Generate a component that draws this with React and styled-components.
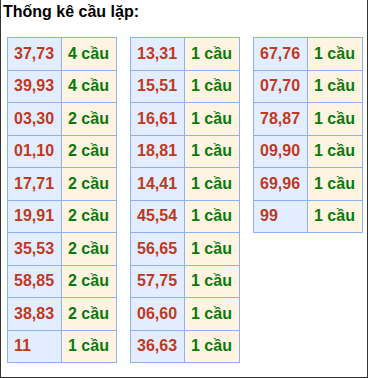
import styled, { createGlobalStyle } from "styled-components";

const data = [
  [
    ["37,73", 4],
    ["39,93", 4],
    ["03,30", 2],
    ["01,10", 2],
    ["17,71", 2],
    ["19,91", 2],
    ["35,53", 2],
    ["58,85", 2],
    ["38,83", 2],
    ["11", 1],
  ],
  [
    ["13,31", 1],
    ["15,51", 1],
    ["16,61", 1],
    ["18,81", 1],
    ["14,41", 1],
    ["45,54", 1],
    ["56,65", 1],
    ["57,75", 1],
    ["06,60", 1],
    ["36,63", 1],
  ],
  [
    ["67,76", 1],
    ["07,70", 1],
    ["78,87", 1],
    ["09,90", 1],
    ["69,96", 1],
    ["99", 1],
  ],
];

export default function App() {
  return (
    <>
      <GlobalStyle />
      <Box>
        <Title>Thống kê cầu lặp:</Title>
        <Columns>
          {data.map((col, i) => (
            <Table key={i}>
              {col.map(([pair, count]) => (
                <Row key={pair}>
                  <Pair>{pair}</Pair>
                  <Count>{count} cầu</Count>
                </Row>
              ))}
            </Table>
          ))}
        </Columns>
      </Box>
    </>
  );
}

const GlobalStyle = createGlobalStyle`
  body {
    margin: 0;
    background: #ffffff;
    font-family: "Liberation Sans", Arial, sans-serif;
  }
`;

const Box = styled.div`
  width: 368px;
  height: 378px;
  box-sizing: border-box;
  border: 1px solid #333333;
  border-top: none;
  background: #ffffff;
`;

const Title = styled.div`
  font-weight: 700;
  font-size: 16px;
  line-height: 18px;
  color: #000000;
  padding: 3px 0 0 2px;
`;

const Columns = styled.div`
  display: flex;
  align-items: flex-start;
  gap: 13px;
  padding: 16px 0 0 6px;
`;

const Table = styled.div`
  display: grid;
  grid-template-columns: 53px 54px;
  grid-auto-rows: 31.5px;
  gap: 1px;
  padding: 1px;
  background: #8db2f2;
`;

const Row = styled.div`
  display: contents;
`;

const Cell = styled.div`
  display: flex;
  align-items: center;
  padding-left: 6px;
  font-weight: 700;
  font-size: 16px;
`;

const Pair = styled(Cell)`
  background: #e2eeff;
  color: #c0391e;
`;

const Count = styled(Cell)`
  background: #fff3e2;
  color: #0a7a0a;
`;
